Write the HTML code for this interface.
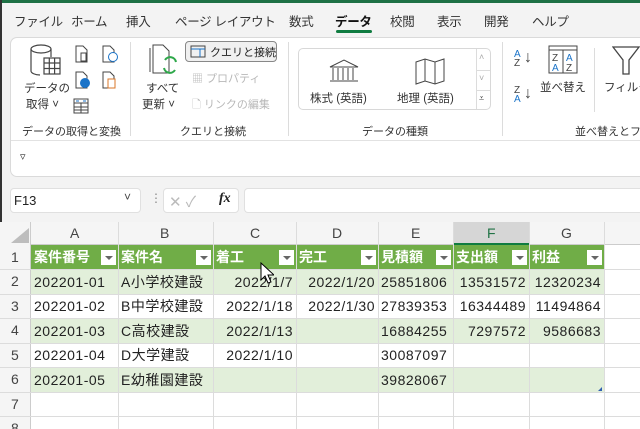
<!DOCTYPE html>
<html><head><meta charset="utf-8"><style>
*{margin:0;padding:0;box-sizing:border-box}
html,body{width:640px;height:429px;overflow:hidden}
body{background:#f3f3f3;font-family:"Liberation Sans","Noto Sans CJK JP",sans-serif;color:#222;position:relative}
.a{position:absolute;white-space:nowrap}
.tab{position:absolute;top:11px;font-size:12.5px;color:#333;white-space:nowrap;letter-spacing:-0.3px}
.gl{position:absolute;top:123px;font-size:11px;color:#333;white-space:nowrap}
.sm{font-size:11.5px;color:#333}
.dis{color:#b8b8b8}
.cell{position:absolute;height:24.5px;font-size:14px;line-height:24px;padding:0 3px;overflow:hidden;white-space:nowrap;letter-spacing:0.5px}
.hd{color:#fff;font-weight:bold;font-size:14px;letter-spacing:0}
.dd{position:absolute;width:15px;height:15px;background:#fff;top:5px}
.dd:after{content:"";position:absolute;left:4px;top:6px;border-left:4px solid transparent;border-right:4px solid transparent;border-top:4px solid #666}
.vl{position:absolute;width:1px;background:#dcdcdc}
.hl{position:absolute;height:1px;background:#dcdcdc}
</style></head><body>
<div class="a" style="left:0;top:0;width:640px;height:3px;background:#1e7145"></div>
<div class="a" style="left:0;top:0;width:2px;height:429px;background:#333"></div>
<div class="tab" style="left:14px">ファイル</div>
<div class="tab" style="left:71px">ホーム</div>
<div class="tab" style="left:126px">挿入</div>
<div class="tab" style="left:175px">ページ レイアウト</div>
<div class="tab" style="left:289px">数式</div>
<div class="tab" style="left:335px;font-weight:bold;color:#111">データ</div>
<div class="a" style="left:336px;top:30px;width:36px;height:3px;background:#107c41;border-radius:2px"></div>
<div class="tab" style="left:390px">校閲</div>
<div class="tab" style="left:437px">表示</div>
<div class="tab" style="left:484px">開発</div>
<div class="tab" style="left:532px">ヘルプ</div>

<div class="a" style="left:10px;top:37px;width:630px;height:140px;background:#fff;border:1px solid #dadada;border-right:none;border-radius:7px 0 0 7px"></div>
<div class="a" style="left:11px;top:140px;width:629px;height:1px;background:#e2e2e2"></div>
<div class="a sm" style="left:20px;top:150px;font-size:11px">▿</div>
<div class="vl" style="left:130px;top:42px;height:94px"></div>
<div class="vl" style="left:288px;top:42px;height:94px"></div>
<div class="vl" style="left:502px;top:42px;height:94px"></div>
<div class="vl" style="left:594px;top:48px;height:64px"></div>

<svg class="a" style="left:30px;top:44px" width="32" height="36" viewBox="0 0 32 36" fill="none" stroke="#444" stroke-width="1.2"><ellipse cx="11" cy="5" rx="10" ry="4"/><path d="M1 5v22c0 2 4 4 9 4"/><path d="M21 5v8"/><rect x="14" y="14" width="16" height="16" fill="#fff"/><path d="M14 19h16M14 24.5h16M19.3 14v16M24.6 14v16"/></svg>
<div class="a sm" style="left:24px;top:80px">データの</div>
<div class="a sm" style="left:26px;top:96px">取得 ˅</div>
<svg class="a" style="left:75px;top:45px" width="14" height="18" fill="none" stroke="#444"><path d="M1 1h7l4 4v12H1z"/><rect x="6" y="8" width="5" height="8"/></svg>
<svg class="a" style="left:102px;top:45px" width="16" height="18" fill="none" stroke="#444"><path d="M1 1h7l4 4v12H1z"/><circle cx="11" cy="12" r="4.5" fill="#fff" stroke="#1a73c8"/></svg>
<svg class="a" style="left:75px;top:71px" width="16" height="18" fill="none" stroke="#444"><path d="M1 1h7l4 4v12H1z"/><circle cx="10" cy="12" r="4.5" fill="#1a73c8" stroke="#1a73c8"/></svg>
<svg class="a" style="left:102px;top:71px" width="16" height="18" fill="none" stroke="#444"><path d="M1 1h7l4 4v12H1z"/><rect x="6" y="8" width="7" height="9" fill="#fff" stroke="#d9772a"/></svg>
<svg class="a" style="left:73px;top:98px" width="16" height="16" fill="none" stroke="#444"><rect x="1" y="1" width="14" height="14"/><path d="M1 5h14M1 9h14M1 12h14M8 5v10" /><path d="M3 3h3M10 3h3" stroke="#1a73c8"/></svg>
<div class="gl" style="left:22px">データの取得と変換</div>

<svg class="a" style="left:146px;top:44px" width="34" height="36" fill="none" stroke="#444"><path d="M4 4v24M7 1h10l6 6v22H7z"/><path d="M30 18a6 6 0 0 0-11-2M18 24a6 6 0 0 0 11 2" stroke="#2ea84a" stroke-width="2"/></svg>
<div class="a sm" style="left:146px;top:80px">すべて</div>
<div class="a sm" style="left:142px;top:96px">更新 ˅</div>
<div class="a" style="left:185px;top:41px;width:92px;height:21px;background:#f0f0f0;border:1px solid #888;border-radius:4px"></div>
<svg class="a" style="left:190px;top:45px" width="16" height="13" fill="none" stroke="#444"><rect x="1" y="1" width="14" height="11"/><path d="M1 4h14M10 4v8" stroke="#1a73c8"/></svg>
<div class="a" style="left:210px;top:44px;font-size:11px">クエリと接続</div>
<div class="a dis" style="left:192px;top:70px;font-size:11px">▦ プロパティ</div>
<div class="a dis" style="left:192px;top:96px;font-size:11px">🗋 リンクの編集</div>
<div class="gl" style="left:180px">クエリと接続</div>

<div class="a" style="left:298px;top:48px;width:193px;height:62px;border:1px solid #d8d8d8;border-radius:5px"></div>
<div class="hl" style="left:476px;top:70px;width:14px"></div><div class="hl" style="left:476px;top:90px;width:14px"></div>
<div class="vl" style="left:476px;top:49px;height:60px"></div>
<div class="a" style="left:479px;top:52px;font-size:9px;color:#aaa">˄</div>
<div class="a" style="left:479px;top:73px;font-size:9px;color:#aaa">˅</div>
<div class="a" style="left:479px;top:93px;font-size:9px;color:#444">⩡</div>
<svg class="a" style="left:328px;top:59px" width="32" height="24" fill="none" stroke="#444"><path d="M2 8L16 1l14 7zM2 8h28M2 22h28M5 9v12M10 9v12M15 9v12M20 9v12M25 9v12"/></svg>
<svg class="a" style="left:415px;top:58px" width="32" height="28" fill="none" stroke="#444"><path d="M1 4l9-3 10 3 9-3v22l-9 3-10-3-9 3zM10 1v22M20 4v22"/></svg>
<div class="a sm" style="left:310px;top:90px">株式 (英語)</div>
<div class="a sm" style="left:397px;top:90px">地理 (英語)</div>
<div class="gl" style="left:362px">データの種類</div>

<div class="a" style="left:514px;top:50px;font-size:10px;line-height:9px;color:#1a73c8">A<br><span style="color:#444">Z</span></div><div class="a" style="left:524px;top:49px;font-size:16px;color:#444">↓</div>
<div class="a" style="left:514px;top:86px;font-size:10px;line-height:9px;color:#444">Z<br><span style="color:#1a73c8">A</span></div><div class="a" style="left:524px;top:85px;font-size:16px;color:#444">↓</div>
<svg class="a" style="left:548px;top:45px" width="30" height="29" fill="none" stroke="#444"><rect x="1" y="1" width="28" height="27"/><path d="M1 5h28M15 5v23"/><text x="4" y="16" font-size="10" fill="#444" stroke="none" font-family="Liberation Sans">Z</text><text x="4" y="26" font-size="10" fill="#1a73c8" stroke="none" font-family="Liberation Sans">A</text><text x="18" y="16" font-size="10" fill="#1a73c8" stroke="none" font-family="Liberation Sans">A</text><text x="18" y="26" font-size="10" fill="#444" stroke="none" font-family="Liberation Sans">Z</text></svg>
<div class="a sm" style="left:540px;top:79px">並べ替え</div>
<svg class="a" style="left:612px;top:46px" width="28" height="30" fill="none" stroke="#444" stroke-width="1.3"><path d="M1 1h26l-10 13v14h-6V14z"/></svg>
<div class="a sm" style="left:604px;top:79px;width:36px;overflow:hidden">フィルタ</div>
<div class="gl" style="left:575px;width:65px;overflow:hidden">並べ替えとフィ</div>

<div class="a" style="left:10px;top:188px;width:131px;height:25px;background:#fff;border:1px solid #e0e0e0;border-radius:4px"></div>
<div class="a" style="left:14px;top:193px;font-size:13px">F13</div>
<div class="a" style="left:124px;top:190px;font-size:12px;color:#444">˅</div>
<div class="a" style="left:150px;top:191px;font-size:12px;color:#888">⋮</div>
<div class="a" style="left:163px;top:188px;width:76px;height:25px;background:#fff;border:1px solid #e0e0e0;border-radius:4px"></div>
<div class="a" style="left:169px;top:191px;font-size:15px;color:#bbb">✕ ✓</div>
<div class="a" style="left:219px;top:191px;font-size:14px;font-style:italic;font-family:'Liberation Serif',serif;font-weight:bold">fx</div>
<div class="a" style="left:244px;top:188px;width:396px;height:25px;background:#fff;border:1px solid #e0e0e0;border-right:none;border-radius:4px 0 0 4px"></div>

<div class="a" style="left:0;top:222px;width:640px;height:207px;background:#fff"></div>
<div class="a" style="left:0;top:222px;width:640px;height:23px;background:#f5f5f5;border-bottom:1px solid #ccc"></div>
<div class="a" style="left:0;top:222px;width:31px;height:207px;background:#f5f5f5;border-right:1px solid #ccc"></div>
<svg class="a" style="left:8px;top:227px" width="22" height="17"><path d="M21 1v15H3z" fill="#bdbdbd"/></svg>
<div class="a" style="left:453px;top:222px;width:76px;height:23px;background:#d6d6d6;border-bottom:2px solid #107c41"></div>
<div class="a" style="left:31px;top:245px;width:573px;height:24.5px;background:#70ad47"></div>
<div class="a" style="left:31px;top:269.5px;width:573px;height:24.5px;background:#e2efda"></div>
<div class="a" style="left:31px;top:318.5px;width:573px;height:24.5px;background:#e2efda"></div>
<div class="a" style="left:31px;top:367.5px;width:573px;height:24.5px;background:#e2efda"></div>
<div class="a" style="left:598px;top:387px;border-left:4px solid transparent;border-bottom:4px solid #3060b0"></div>

<div class="a" style="top:225px;left:70px;font-size:14px;color:#444">A</div>
<div class="a" style="top:225px;left:160px;font-size:14px;color:#444">B</div>
<div class="a" style="top:225px;left:250px;font-size:14px;color:#444">C</div>
<div class="a" style="top:225px;left:332px;font-size:14px;color:#444">D</div>
<div class="a" style="top:225px;left:411px;font-size:14px;color:#444">E</div>
<div class="a" style="top:225px;left:487px;font-size:14px;color:#217346">F</div>
<div class="a" style="top:225px;left:561px;font-size:14px;color:#444">G</div>
<div class="vl" style="left:118px;top:222px;height:207px"></div>
<div class="vl" style="left:213px;top:222px;height:207px"></div>
<div class="vl" style="left:296px;top:222px;height:207px"></div>
<div class="vl" style="left:378px;top:222px;height:207px"></div>
<div class="vl" style="left:453px;top:222px;height:207px"></div>
<div class="vl" style="left:529px;top:222px;height:207px"></div>
<div class="vl" style="left:604px;top:222px;height:207px"></div>
<div class="hl" style="left:0;top:269px;width:640px"></div>
<div class="hl" style="left:0;top:293.5px;width:640px"></div>
<div class="hl" style="left:0;top:318px;width:640px"></div>
<div class="hl" style="left:0;top:342.5px;width:640px"></div>
<div class="hl" style="left:0;top:367px;width:640px"></div>
<div class="hl" style="left:0;top:391.5px;width:640px"></div>
<div class="hl" style="left:0;top:416px;width:640px"></div>
<div class="a" style="left:11px;top:249px;font-size:14px;color:#444">1</div>
<div class="a" style="left:11px;top:273px;font-size:14px;color:#444">2</div>
<div class="a" style="left:11px;top:298px;font-size:14px;color:#444">3</div>
<div class="a" style="left:11px;top:322px;font-size:14px;color:#444">4</div>
<div class="a" style="left:11px;top:347px;font-size:14px;color:#444">5</div>
<div class="a" style="left:11px;top:371px;font-size:14px;color:#444">6</div>
<div class="a" style="left:11px;top:396px;font-size:14px;color:#444">7</div>
<div class="a" style="left:11px;top:420px;font-size:14px;color:#444;height:9px;overflow:hidden">8</div>

<div class="cell hd" style="left:31px;top:245px">案件番号</div><div class="dd" style="left:101px;top:250px"></div>
<div class="cell hd" style="left:118px;top:245px">案件名</div><div class="dd" style="left:196px;top:250px"></div>
<div class="cell hd" style="left:213px;top:245px">着工</div><div class="dd" style="left:279px;top:250px"></div>
<div class="cell hd" style="left:296px;top:245px">完工</div><div class="dd" style="left:361px;top:250px"></div>
<div class="cell hd" style="left:378px;top:245px">見積額</div><div class="dd" style="left:436px;top:250px"></div>
<div class="cell hd" style="left:453px;top:245px">支出額</div><div class="dd" style="left:512px;top:250px"></div>
<div class="cell hd" style="left:529px;top:245px">利益</div><div class="dd" style="left:587px;top:250px"></div>

<div class="cell" style="left:31px;top:269.5px">202201-01</div>
<div class="cell" style="left:118px;top:269.5px">A小学校建設</div>
<div class="cell" style="left:213px;top:269.5px;width:83px;text-align:right">2022/1/7</div>
<div class="cell" style="left:296px;top:269.5px;width:82px;text-align:right">2022/1/20</div>
<div class="cell" style="left:378px;top:269.5px">25851806</div>
<div class="cell" style="left:453px;top:269.5px;width:76px;text-align:right">13531572</div>
<div class="cell" style="left:529px;top:269.5px;width:75px;text-align:right">12320234</div>

<div class="cell" style="left:31px;top:294px">202201-02</div>
<div class="cell" style="left:118px;top:294px">B中学校建設</div>
<div class="cell" style="left:213px;top:294px;width:83px;text-align:right">2022/1/18</div>
<div class="cell" style="left:296px;top:294px;width:82px;text-align:right">2022/1/30</div>
<div class="cell" style="left:378px;top:294px">27839353</div>
<div class="cell" style="left:453px;top:294px;width:76px;text-align:right">16344489</div>
<div class="cell" style="left:529px;top:294px;width:75px;text-align:right">11494864</div>

<div class="cell" style="left:31px;top:318.5px">202201-03</div>
<div class="cell" style="left:118px;top:318.5px">C高校建設</div>
<div class="cell" style="left:213px;top:318.5px;width:83px;text-align:right">2022/1/13</div>
<div class="cell" style="left:378px;top:318.5px">16884255</div>
<div class="cell" style="left:453px;top:318.5px;width:76px;text-align:right">7297572</div>
<div class="cell" style="left:529px;top:318.5px;width:75px;text-align:right">9586683</div>

<div class="cell" style="left:31px;top:343px">202201-04</div>
<div class="cell" style="left:118px;top:343px">D大学建設</div>
<div class="cell" style="left:213px;top:343px;width:83px;text-align:right">2022/1/10</div>
<div class="cell" style="left:378px;top:343px">30087097</div>

<div class="cell" style="left:31px;top:367.5px">202201-05</div>
<div class="cell" style="left:118px;top:367.5px">E幼稚園建設</div>
<div class="cell" style="left:378px;top:367.5px">39828067</div>

<svg class="a" style="left:260px;top:262px" width="14" height="22"><path d="M1 1v17l4-4 3 7 3-1-3-7h6z" fill="#fff" stroke="#000"/></svg>
</body></html>
